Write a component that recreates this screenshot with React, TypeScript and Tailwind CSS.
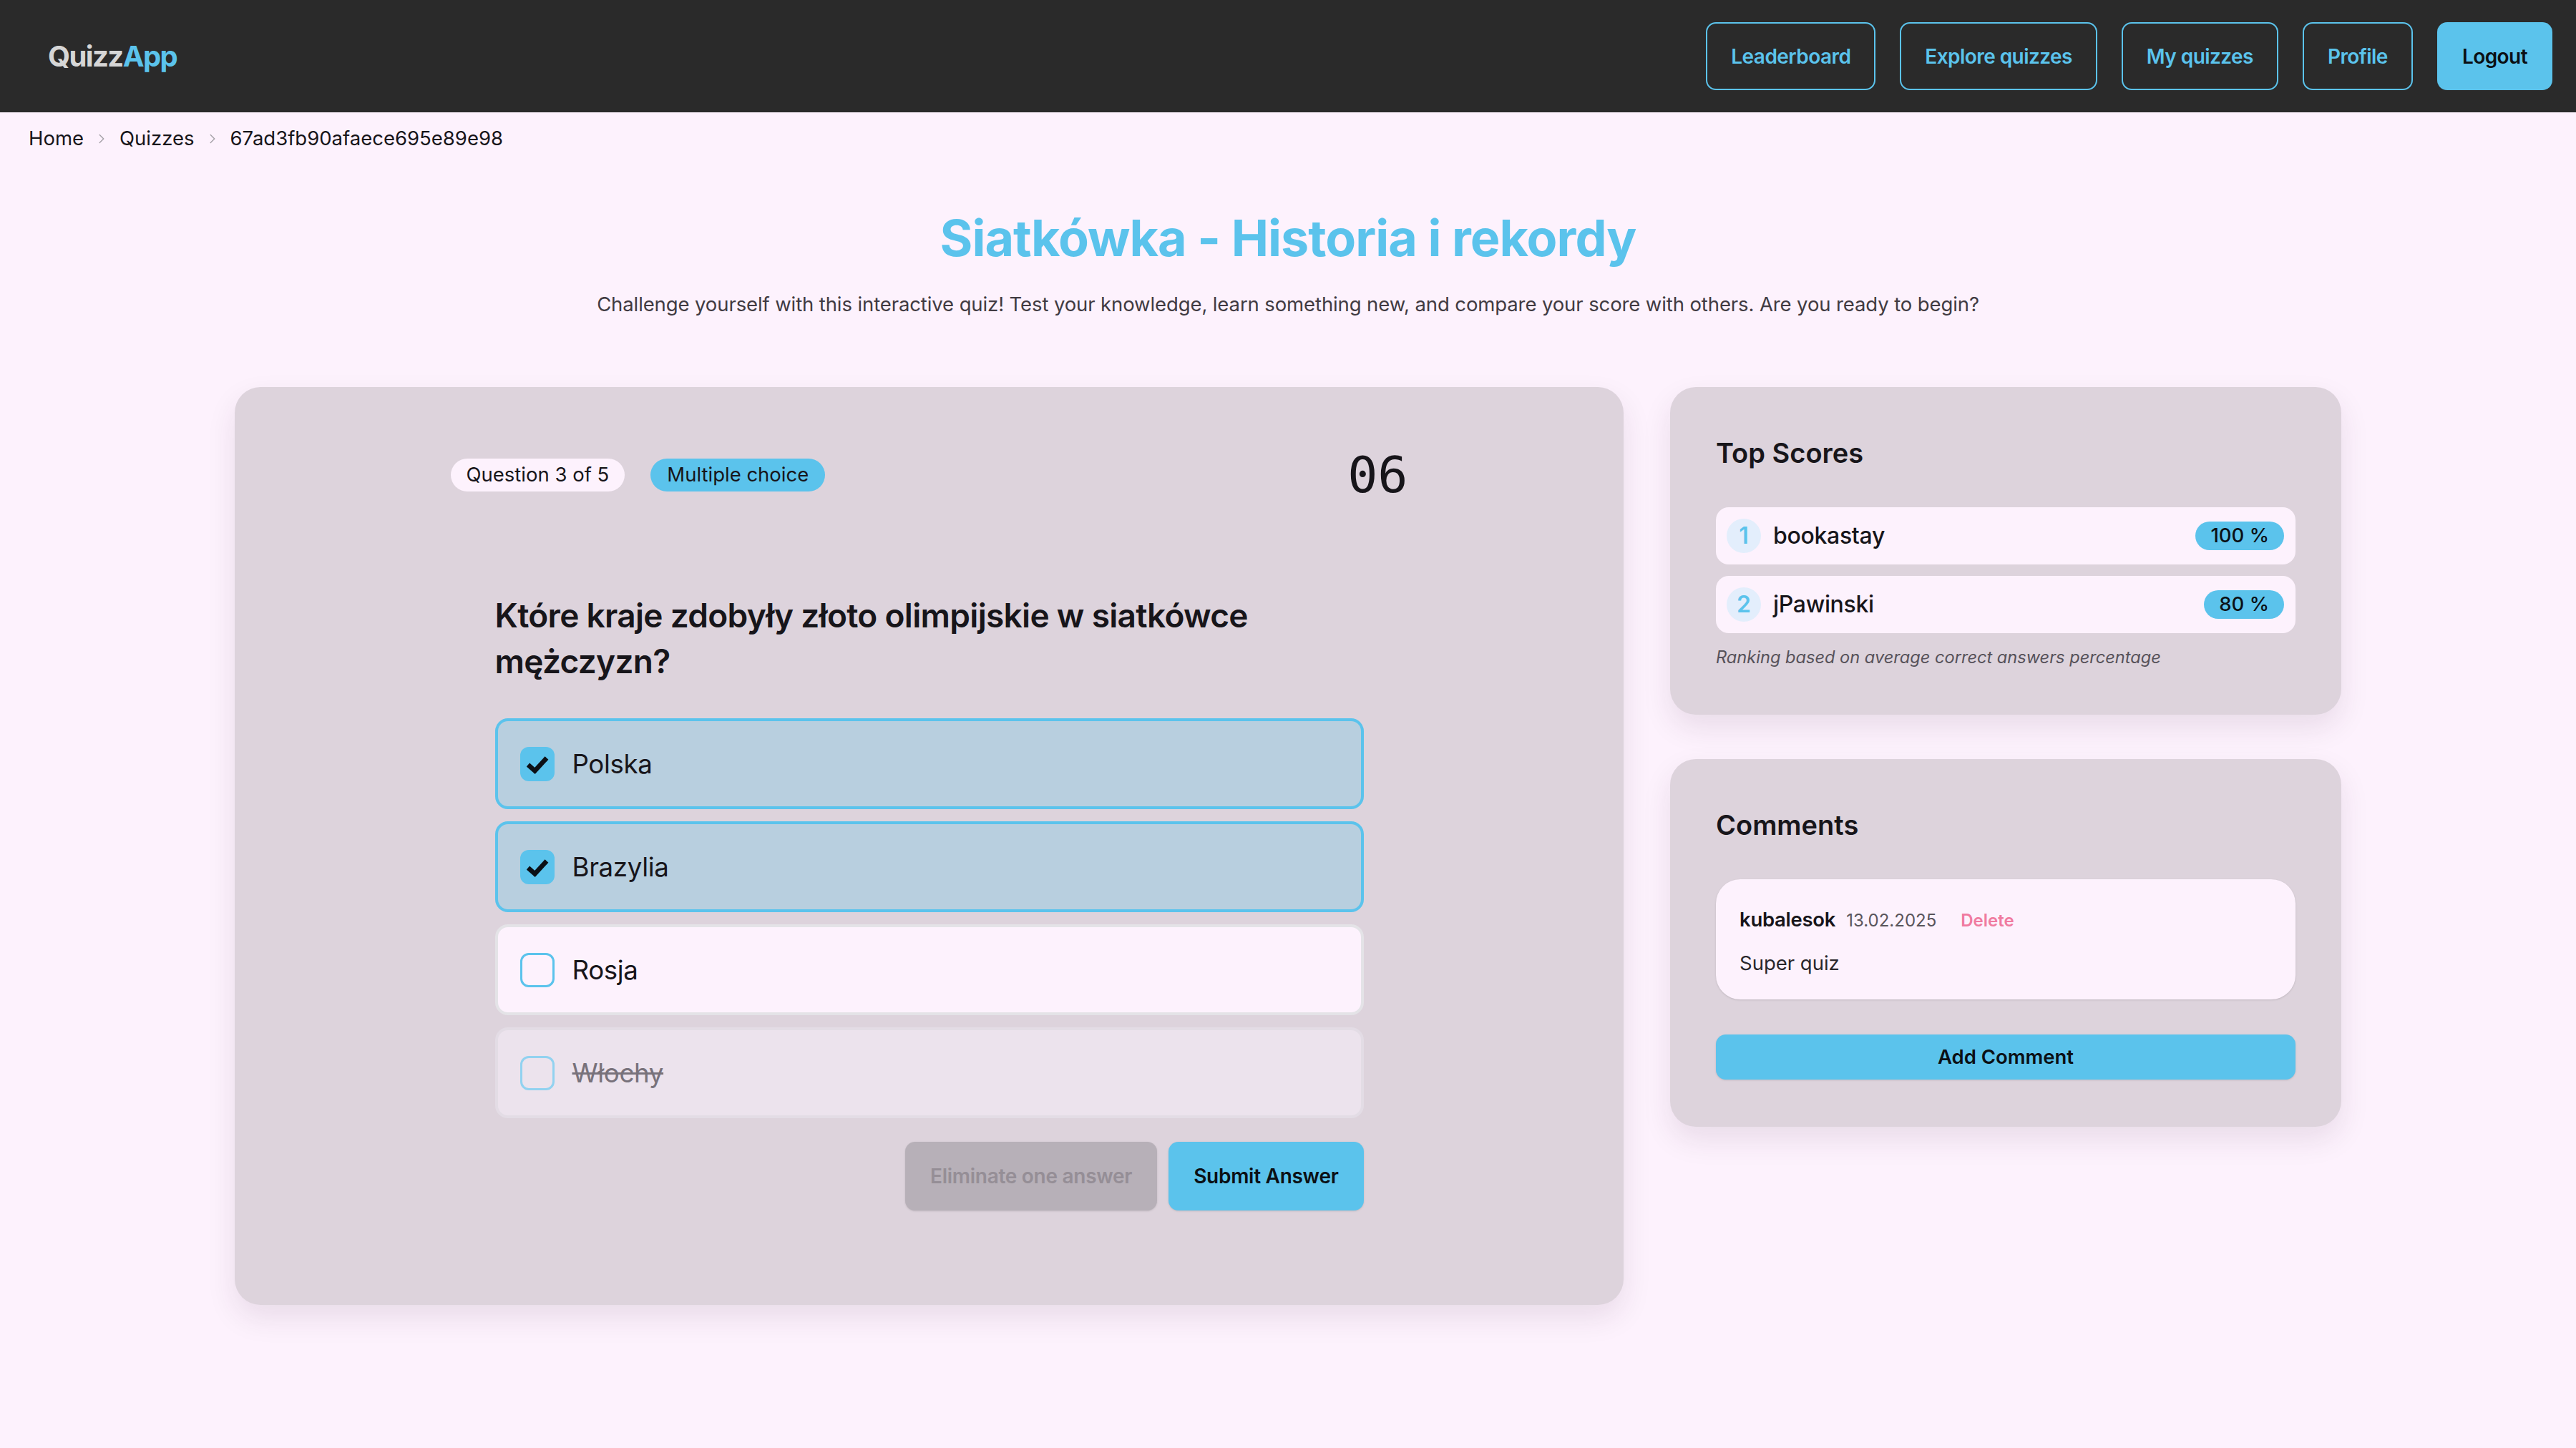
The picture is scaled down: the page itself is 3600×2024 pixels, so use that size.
import React from "react";
import { ChevronRight } from "lucide-react";

const sky = "#5bc3ec";

type Answer = {
  label: string;
  state: "checked" | "open" | "eliminated";
};

const answers: Answer[] = [
  { label: "Polska", state: "checked" },
  { label: "Brazylia", state: "checked" },
  { label: "Rosja", state: "open" },
  { label: "Włochy", state: "eliminated" },
];

const scores = [
  { rank: 1, name: "bookastay", pct: "100 %" },
  { rank: 2, name: "jPawinski", pct: "80 %" },
];

const navLinks = ["Leaderboard", "Explore quizzes", "My quizzes", "Profile"];

function CheckBox({ state }: { state: Answer["state"] }) {
  if (state === "checked") {
    return (
      <span className="flex h-[48px] w-[48px] shrink-0 items-center justify-center rounded-[12px] bg-[#5bc3ec]">
        <svg width="48" height="48" viewBox="0 0 48 48" fill="none">
          <path d="M11 25 L20.5 33.5 L37 15.5" stroke="#0b1015" strokeWidth="6.5" strokeLinejoin="miter" />
        </svg>
      </span>
    );
  }
  return (
    <span
      className={
        state === "eliminated"
          ? "h-[48px] w-[48px] shrink-0 rounded-[12px] border-[3px] border-[#92d2f0]"
          : "h-[48px] w-[48px] shrink-0 rounded-[12px] border-[3px] border-[#5bc3ec]"
      }
    />
  );
}

function AnswerRow({ answer }: { answer: Answer }) {
  const box =
    answer.state === "checked"
      ? "bg-[#b8cfdf] border-[#5bc3ec]"
      : answer.state === "eliminated"
      ? "bg-[#ece3ed] border-[#e3dce5]"
      : "bg-[#fdf2fd] border-[#e4e3e7]";
  return (
    <div className={`flex h-[127px] items-center gap-[25px] rounded-[18px] border-[4px] pl-[31px] ${box}`}>
      <CheckBox state={answer.state} />
      <span
        className={
          answer.state === "eliminated"
            ? "text-[36.7px] leading-[55px] tracking-[-0.01em] text-[#78727b] line-through"
            : "text-[36.7px] leading-[55px] tracking-[-0.01em] text-[#17151a]"
        }
      >
        {answer.label}
      </span>
    </div>
  );
}

function QuizCard() {
  return (
    <section className="col-span-2 rounded-[36px] bg-[#ddd3dc] pt-[73px] pb-[132px] shadow-[0_18px_40px_rgba(60,30,60,0.10)]">
      <div className="mx-auto flex h-[100px] w-[1338px] items-center">
        <span className="flex h-[46px] items-center rounded-full bg-[#fdf2fd] px-[22px] text-[27.5px] text-[#17151a]">
          Question 3 of 5
        </span>
        <span className="ml-[36px] flex h-[46px] items-center rounded-full bg-[#5bc3ec] px-[23px] text-[27.5px] text-[#17151a]">
          Multiple choice
        </span>
        <span className="ml-auto font-['DejaVu_Sans_Mono',monospace] text-[70px] leading-none text-[#17151a]">06</span>
      </div>

      <div className="mx-auto w-[1214px]">
        <h2 className="mt-[114px] text-[46px] font-semibold leading-[64px] tracking-[-0.015em] text-[#17151a]">
          Które kraje zdobyły złoto olimpijskie w siatkówce mężczyzn?
        </h2>

        <div className="mt-[48px] flex flex-col gap-[17px]">
          {answers.map((a) => (
            <AnswerRow key={a.label} answer={a} />
          ))}
        </div>

        <div className="mt-[33px] flex justify-end gap-[16px]">
          <button className="h-[96px] rounded-[14px] bg-[#b7b0b8] px-[35px] text-[28px] font-semibold tracking-[-0.01em] text-[#958e96] shadow-sm">
            Eliminate one answer
          </button>
          <button className="h-[96px] rounded-[14px] bg-[#5bc3ec] px-[35px] text-[28px] font-semibold tracking-[-0.01em] text-[#0b1015] shadow-sm">
            Submit Answer
          </button>
        </div>
      </div>
    </section>
  );
}

function TopScores() {
  return (
    <section className="rounded-[36px] bg-[#ddd3dc] px-[64px] pt-[64px] pb-[62px] shadow-[0_18px_40px_rgba(60,30,60,0.10)]">
      <h3 className="text-[38px] font-semibold leading-[57px] text-[#17151a]">Top Scores</h3>
      <div className="mt-[47px] flex flex-col gap-[16px]">
        {scores.map((s) => (
          <div key={s.rank} className="flex h-[80px] items-center rounded-[18px] bg-[#fdf2fd] pl-[15px] pr-[16px]">
            <span className="flex h-[48px] w-[48px] items-center justify-center rounded-full bg-[#e3eefc] text-[32px] font-semibold text-[#5bc3ec]">
              {s.rank}
            </span>
            <span className="ml-[17px] text-[32px] font-medium tracking-[-0.01em] text-[#17151a]">{s.name}</span>
            <span className="ml-auto flex h-[40px] items-center rounded-full bg-[#5bc3ec] px-[21px] text-[27.5px] font-medium text-[#0b1015]">
              {s.pct}
            </span>
          </div>
        ))}
      </div>
      <p className="mt-[15px] text-[23.6px] italic leading-[37px] text-[#57525a]">
        Ranking based on average correct answers percentage
      </p>
    </section>
  );
}

function Comments() {
  return (
    <section className="rounded-[36px] bg-[#ddd3dc] px-[64px] pt-[64px] pb-[66px] shadow-[0_18px_40px_rgba(60,30,60,0.10)]">
      <h3 className="text-[38px] font-semibold leading-[57px] text-[#17151a]">Comments</h3>
      <div className="mt-[47px] rounded-[34px] bg-[#fdf2fd] px-[33px] pt-[36px] pb-[30px] shadow-sm">
        <div className="flex items-baseline leading-[41px]">
          <span className="text-[27.5px] font-semibold tracking-[-0.01em] text-[#17151a]">kubalesok</span>
          <span className="ml-[15px] text-[24px] text-[#5a555c]">13.02.2025</span>
          <span className="ml-[34px] text-[24px] font-semibold text-[#f07ba0]">Delete</span>
        </div>
        <p className="mt-[19px] text-[27.5px] leading-[41px] text-[#2a272c]">Super quiz</p>
      </div>
      <button className="mt-[49px] h-[63px] w-full rounded-[14px] bg-[#5bc3ec] text-[27.5px] font-semibold text-[#0b1015] shadow-sm">
        Add Comment
      </button>
    </section>
  );
}

export default function App() {
  return (
    <div className="min-h-screen bg-[#fdf2fd] pb-[200px] font-['Inter',sans-serif] text-[#17151a]">
      <nav className="flex h-[157px] items-center justify-between bg-[#2a2a2a] pl-[67px] pr-[33px]">
        <div className="text-[40px] font-bold tracking-[-0.04em]">
          <span className="text-[#d6d6d6]">Quizz</span>
          <span className="text-[#5bc3ec]">App</span>
        </div>
        <div className="flex gap-[34px]">
          {navLinks.map((l) => (
            <button
              key={l}
              className="h-[95px] rounded-[14px] border-2 border-[#5bc3ec] px-[33px] text-[28px] font-semibold tracking-[-0.02em] text-[#5bc3ec]"
            >
              {l}
            </button>
          ))}
          <button className="h-[95px] rounded-[14px] bg-[#5bc3ec] px-[35px] text-[28px] font-semibold tracking-[-0.02em] text-[#0b1015]">
            Logout
          </button>
        </div>
      </nav>

      <div className="flex items-center pl-[40px] pt-[18px] text-[27.5px] leading-[37px] text-[#17151a]">
        <span>Home</span>
        <ChevronRight size={22} strokeWidth={1.5} color="#a3a0a6" className="mx-[14px]" />
        <span>Quizzes</span>
        <ChevronRight size={22} strokeWidth={1.5} color="#a3a0a6" className="mx-[14px]" />
        <span>67ad3fb90afaece695e89e98</span>
      </div>

      <header className="text-center">
        <h1 className="mt-[79px] text-[70px] font-bold leading-[84px] tracking-[-0.014em]" style={{ color: sky }}>
          Siatkówka - Historia i rekordy
        </h1>
        <p className="mt-[30px] text-[27.5px] leading-[41px] tracking-[-0.004em] text-[#413b42]">
          Challenge yourself with this interactive quiz! Test your knowledge, learn something new, and compare your score
          with others. Are you ready to begin?
        </p>
      </header>

      <main className="mx-auto mt-[95px] grid w-[2944px] grid-cols-3 items-start gap-[65px]">
        <QuizCard />
        <div className="flex flex-col gap-[62px]">
          <TopScores />
          <Comments />
        </div>
      </main>
    </div>
  );
}
